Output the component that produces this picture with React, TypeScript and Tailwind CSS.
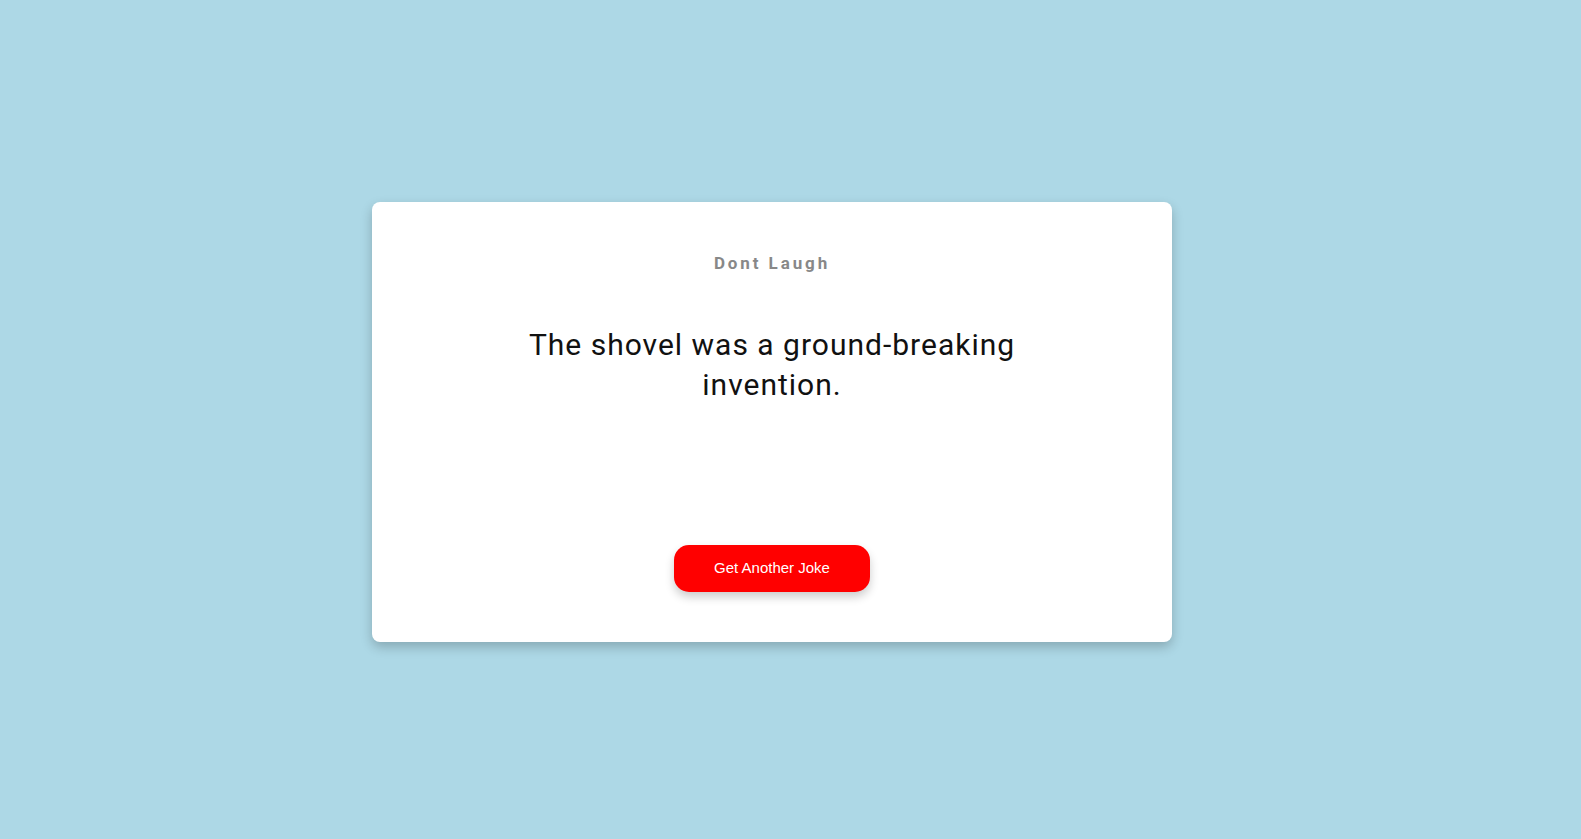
import React from "react";

const App = () => {
  return (
    <div className="min-h-screen w-full bg-[#add8e6] flex items-center justify-center pr-[37px] pt-[5px] font-['Roboto',sans-serif]">
      <div className="w-[800px] h-[440px] bg-white rounded-lg shadow-[0_5px_12px_rgba(0,0,0,0.22)] px-[50px] pt-[52px] pb-[50px] flex flex-col items-center text-center">
        <h3 className="text-[17px] font-bold tracking-[2.9px] text-[#888888] leading-[1.172]">
          Dont Laugh
        </h3>
        <p className="mt-[51px] max-w-[540px] text-[30px] leading-[40px] tracking-[1px] text-[#111111]">
          The shovel was a ground-breaking invention.
        </p>
        <button className="mt-auto h-[47px] w-[196px] rounded-[15px] bg-[#ff0000] text-white text-[15px] font-['Liberation_Sans',Arial,sans-serif] shadow-[0_5px_10px_rgba(0,0,0,0.2)]">
          Get Another Joke
        </button>
      </div>
    </div>
  );
};

export default App;
